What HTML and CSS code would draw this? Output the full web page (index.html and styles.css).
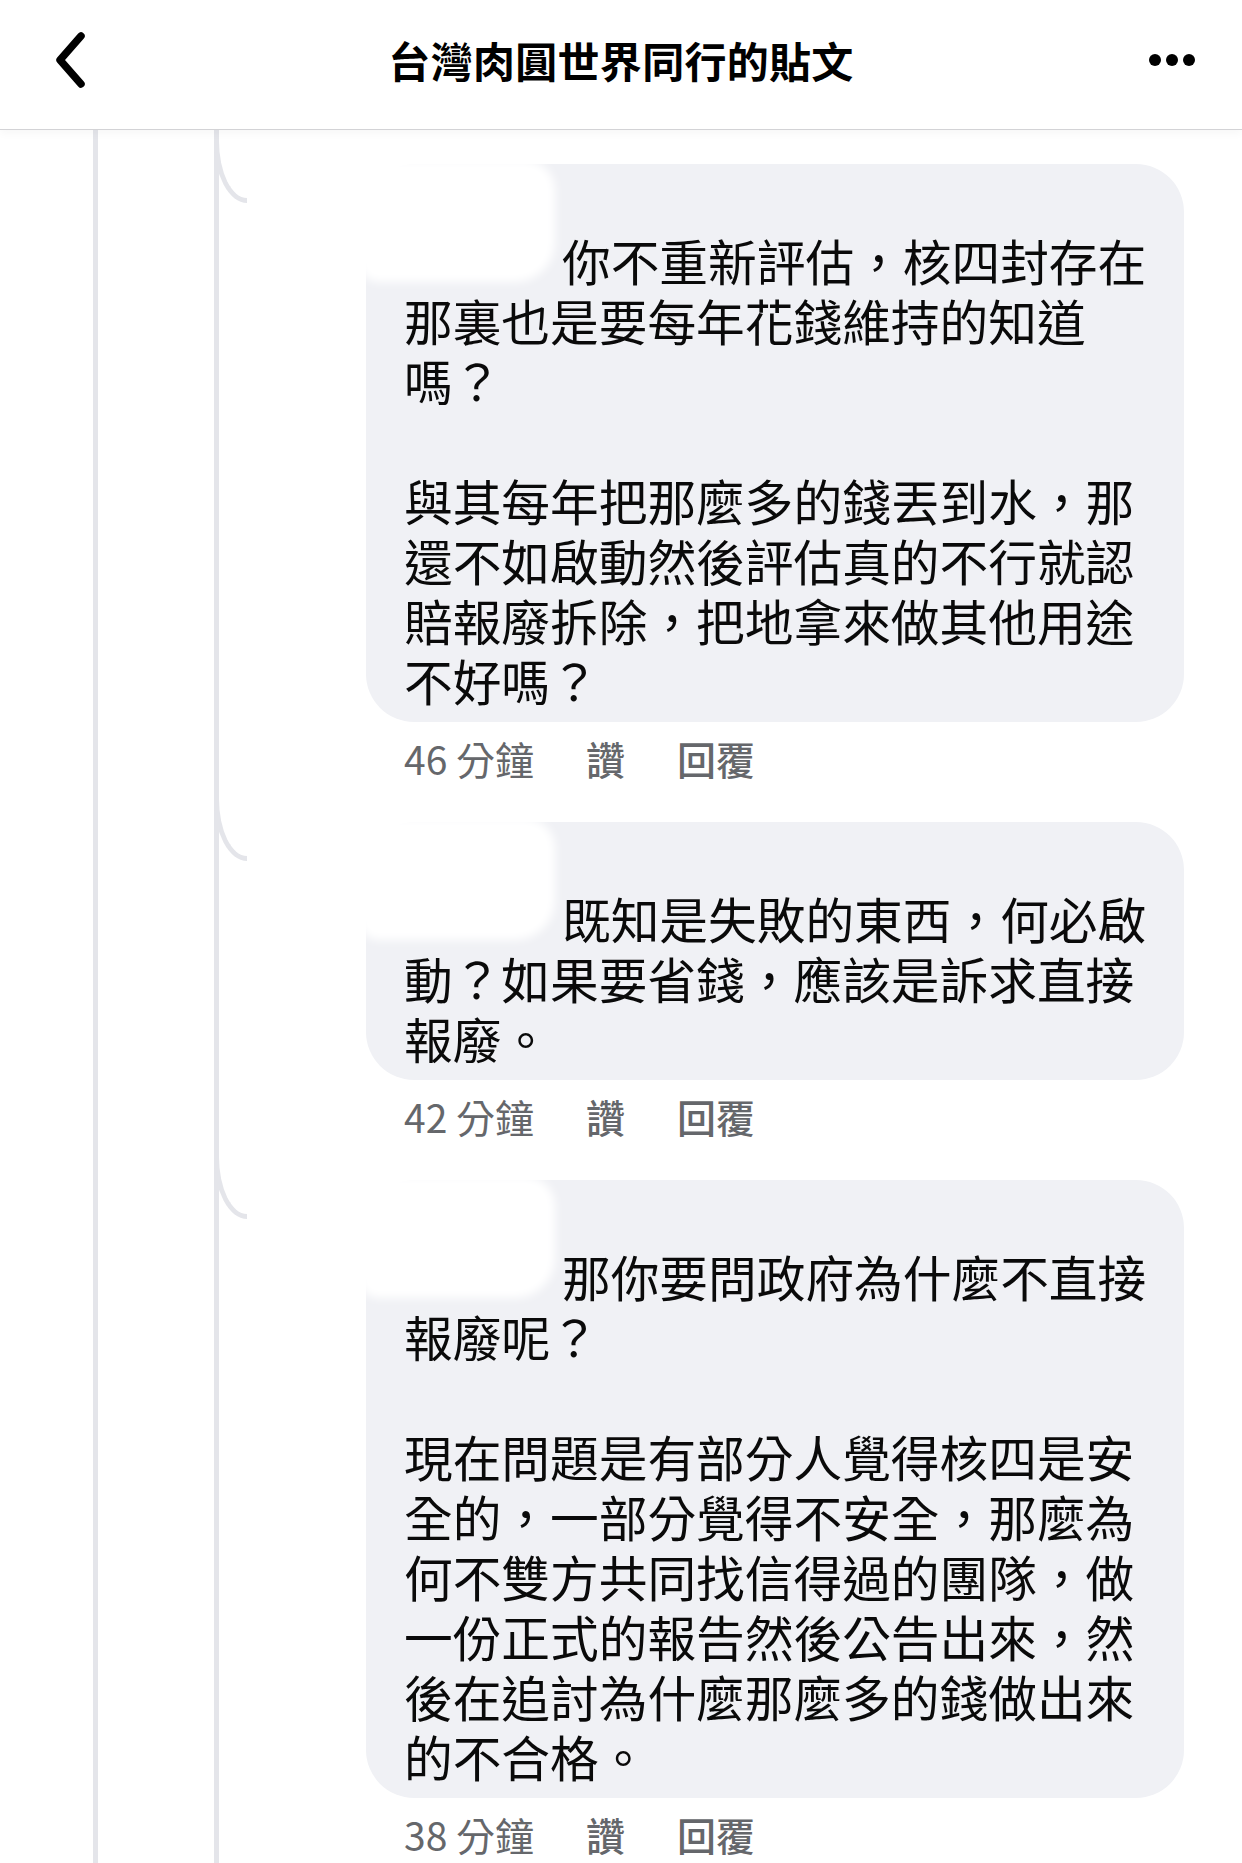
FILE: index.html
```html
<!DOCTYPE html>
<html>
<head>
  <meta charset="UTF-8">
  <title>台灣肉圓世界同行的貼文</title>
  <link rel="stylesheet" href="styles.css">
</head>
<body>
  <div class="header">
    <div class="header-left">
      <svg class="back-icon" width="40" height="58" viewBox="0 0 40 58">
        <polyline points="31,5 10,29 31,53" fill="none" stroke="#000" stroke-width="7.5" stroke-linecap="round" stroke-linejoin="round"/>
      </svg>
    </div>
    <h1 class="title">台灣肉圓世界同行的貼文</h1>
    <div class="header-right">
      <svg class="more-icon" width="48" height="14" viewBox="0 0 48 14">
        <circle cx="7" cy="7" r="6" fill="#000"/>
        <circle cx="24" cy="7" r="6" fill="#000"/>
        <circle cx="41" cy="7" r="6" fill="#000"/>
      </svg>
    </div>
  </div>

  <div class="thread">
    <div class="replies">

      <div class="comment">
        <div class="redact"></div>
        <div class="bubble">
          <p><span class="tag"></span>你不重新評估，核四封存在那裏也是要每年花錢維持的知道嗎？<br><br>與其每年把那麼多的錢丟到水，那還不如啟動然後評估真的不行就認賠報廢拆除，把地拿來做其他用途不好嗎？</p>
        </div>
        <div class="meta">
          <span class="time">46 分鐘</span>
          <span class="action">讚</span>
          <span class="action">回覆</span>
        </div>
      </div>

      <div class="comment">
        <div class="redact"></div>
        <div class="bubble">
          <p><span class="tag"></span>既知是失敗的東西，何必啟動？如果要省錢，應該是訴求直接報廢。</p>
        </div>
        <div class="meta">
          <span class="time">42 分鐘</span>
          <span class="action">讚</span>
          <span class="action">回覆</span>
        </div>
      </div>

      <div class="comment">
        <div class="redact"></div>
        <div class="bubble">
          <p><span class="tag"></span>那你要問政府為什麼不直接報廢呢？<br><br>現在問題是有部分人覺得核四是安全的，一部分覺得不安全，那麼為何不雙方共同找信得過的團隊，做一份正式的報告然後公告出來，然後在追討為什麼那麼多的錢做出來的不合格。</p>
        </div>
        <div class="meta">
          <span class="time">38 分鐘</span>
          <span class="action">讚</span>
          <span class="action">回覆</span>
        </div>
      </div>

    </div>
  </div>
</body>
</html>
```

FILE: styles.css
```css
body {
  margin: 0;
  background-color: #fff;
  font-family: "Noto Sans CJK TC", "Noto Sans", sans-serif;
  color: #0a0a0a;
  overflow: hidden;
}
.header {
  height: 130px;
  box-sizing: border-box;
  padding-bottom: 10px;
  display: grid;
  grid-template-columns: 1fr auto 1fr;
  align-items: center;
  border-bottom: 1px solid #d3d3d6;
  box-shadow: 0 4px 8px rgba(0, 0, 0, 0.03);
  position: relative;
  z-index: 2;
  background-color: #fff;
}
.header-left {
  padding-left: 50px;
  display: flex;
  align-items: center;
}
.header-right {
  padding-right: 46px;
  display: flex;
  justify-content: flex-end;
  align-items: center;
}
.title {
  margin: 0;
  font-size: 42px;
  font-weight: 700;
  letter-spacing: 0.3px;
  color: #000;
}
.thread {
  margin-left: 93px;
  border-left: 5px solid #e4e5ea;
  min-height: 1732px;
}
.replies {
  margin-left: 116px;
  border-left: 5px solid #e4e5ea;
  padding-top: 34px;
  min-height: 1700px;
}
.comment {
  position: relative;
  padding-left: 147px;
  margin-bottom: 44px;
}
.comment::before {
  content: "";
  position: absolute;
  left: -5px;
  top: -32px;
  width: 28px;
  height: 66px;
  border-left: 5px solid #e4e5ea;
  border-bottom: 5px solid #e4e5ea;
  border-bottom-left-radius: 33px 62px;
}
.redact {
  position: absolute;
  left: 140px;
  top: -4px;
  width: 196px;
  height: 122px;
  background-color: #fff;
  border-radius: 18px 30px 40px 20px;
  filter: blur(5px);
  z-index: 1;
}
.bubble {
  width: 818px;
  box-sizing: border-box;
  background-color: #f0f1f5;
  border-radius: 48px;
  padding: 66px 30px 12px 38px;
}
.bubble p {
  margin: 0;
  font-size: 48.7px;
  line-height: 60px;
}
.tag {
  display: inline-block;
  width: 158px;
}
.meta {
  display: flex;
  gap: 52px;
  margin-top: 16px;
  margin-bottom: 2px;
  padding-left: 38px;
  font-size: 39px;
  line-height: 40px;
  color: #65676b;
}
.action {
  font-weight: 500;
  color: #65676b;
}
```
